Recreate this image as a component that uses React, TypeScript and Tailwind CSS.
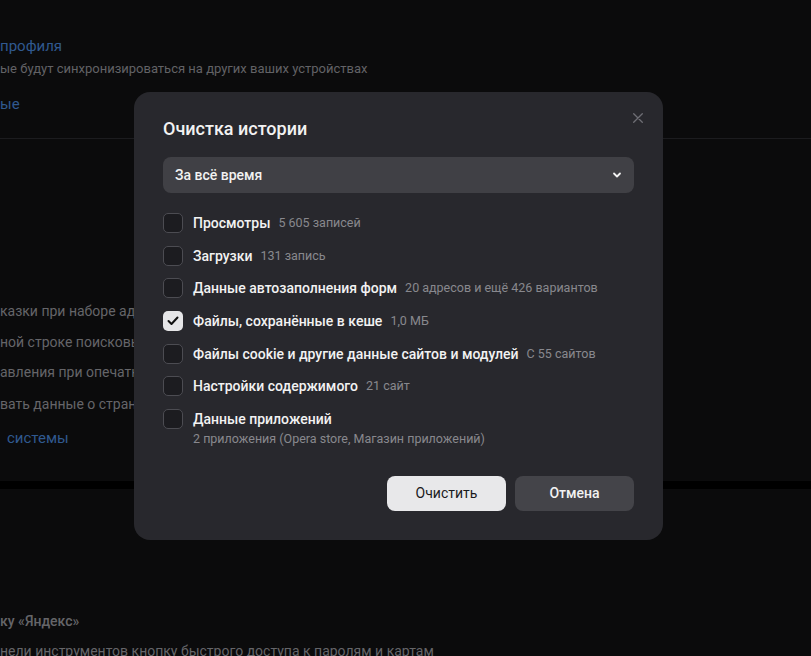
import React, { useState } from "react";

type Item = { label: string; count?: string; note?: string };

const items: Item[] = [
  { label: "Просмотры", count: "5 605 записей" },
  { label: "Загрузки", count: "131 запись" },
  { label: "Данные автозаполнения форм", count: "20 адресов и ещё 426 вариантов" },
  { label: "Файлы, сохранённые в кеше", count: "1,0 МБ" },
  { label: "Файлы cookie и другие данные сайтов и модулей", count: "С 55 сайтов" },
  { label: "Настройки содержимого", count: "21 сайт" },
  { label: "Данные приложений", note: "2 приложения (Opera store, Магазин приложений)" },
];

const Checkbox = ({ checked, onClick }: { checked: boolean; onClick: () => void }) => (
  <button
    type="button"
    onClick={onClick}
    className={
      checked
        ? "flex h-[20px] w-[20px] shrink-0 items-center justify-center rounded-[5px] bg-[#e6e6e8]"
        : "h-[20px] w-[20px] shrink-0 rounded-[5px] border border-[#4c4c52] bg-[#1c1c20]"
    }
  >
    {checked && (
      <svg width="12" height="10" viewBox="0 0 12 10" fill="none">
        <path d="M1.5 5l3 3 6-6.5" stroke="#111" strokeWidth="2" strokeLinecap="round" strokeLinejoin="round" />
      </svg>
    )}
  </button>
);

const App = () => {
  const [checked, setChecked] = useState<boolean[]>([false, false, false, true, false, false, false]);

  const toggle = (i: number) => setChecked(checked.map((c, j) => (j === i ? !c : c)));

  return (
    <div className="relative h-[656px] w-[811px] overflow-hidden bg-[#0b0b0c] font-['Roboto',sans-serif]">
      {/* Settings page behind */}
      <div className="flow-root h-[139px] border-b border-[#1c1c1f]">
        <div className="-mt-[15px] text-[15px] leading-[20px] text-[#2f5a8c]">н</div>
        <div className="mt-[31px] text-[15px] leading-[20px] text-[#30598f]">профиля</div>
        <div className="mt-[4px] text-[13px] leading-[18px] text-[#626266]">
          ые будут синхронизироваться на других ваших устройствах
        </div>
        <div className="mt-[16px] text-[15px] leading-[20px] text-[#30598f]">ые</div>
      </div>
      <div className="h-[342px] text-[14px] leading-[20px] text-[#656569]">
        <div className="pt-[162px]">казки при наборе адресов страниц</div>
        <div className="mt-[11px]">ной строке поисковых систем</div>
        <div className="mt-[10px]">авления при опечатках</div>
        <div className="mt-[12px]">вать данные о страницах</div>
        <div className="mt-[14px] pl-[7px] text-[15px] text-[#30598f]">системы</div>
      </div>
      <div className="h-[8px] bg-black" />
      <div className="text-[14px] leading-[20px] text-[#656569]">
        <div className="pt-[122px] font-medium">ку «Яндекс»</div>
        <div className="mt-[10px]">нели инструментов кнопку быстрого доступа к паролям и картам</div>
      </div>

      {/* Dialog */}
      <div className="absolute left-[134px] top-[92px] w-[529px] rounded-[16px] bg-[#28282d] px-[29px] pb-[29px] pt-[23px]">
        <button type="button" className="absolute right-[19px] top-[20px] p-[1px]">
          <svg width="10" height="10" viewBox="0 0 10 10" fill="none">
            <path d="M0.7 0.7l8.6 8.6M9.3 0.7L0.7 9.3" stroke="#6e6e74" strokeWidth="1.3" strokeLinecap="round" />
          </svg>
        </button>

        <h2 className="text-[18px] font-medium leading-[28px] text-[#f2f2f2]">Очистка истории</h2>

        <div className="mt-[14px] flex h-[36px] items-center justify-between rounded-[8px] bg-[#404045] pl-[12px] pr-[12px]">
          <span className="text-[14px] font-medium text-[#f2f2f2]">За всё время</span>
          <svg width="10" height="6" viewBox="0 0 10 6" fill="none">
            <path d="M2 1.5l3 3 3-3" stroke="#f2f2f2" strokeWidth="1.8" strokeLinecap="round" strokeLinejoin="round" />
          </svg>
        </div>

        <div className="mt-[20px] flex flex-col gap-[12.7px]">
          {items.map((it, i) => (
            <div key={it.label} className="flex items-start gap-[10px]">
              <Checkbox checked={checked[i]} onClick={() => toggle(i)} />
              <div>
                <div className="flex h-[20px] items-center gap-[8px]">
                  <span className="text-[14px] font-medium leading-[20px] text-[#f2f2f2]">{it.label}</span>
                  {it.count && <span className="text-[12.5px] leading-[20px] text-[#88888e]">{it.count}</span>}
                </div>
                {it.note && <div className="text-[12.5px] leading-[20px] text-[#88888e]">{it.note}</div>}
              </div>
            </div>
          ))}
        </div>

        <div className="mt-[27px] flex justify-end gap-[9px]">
          <button
            type="button"
            className="h-[35px] w-[119px] rounded-[8px] bg-[#e8e8ea] text-[14px] text-[#1a1a1c]"
          >
            Очистить
          </button>
          <button
            type="button"
            className="h-[35px] w-[119px] rounded-[8px] bg-[#444449] text-[14px] font-medium text-[#f2f2f2]"
          >
            Отмена
          </button>
        </div>
      </div>
    </div>
  );
};

export default App;
